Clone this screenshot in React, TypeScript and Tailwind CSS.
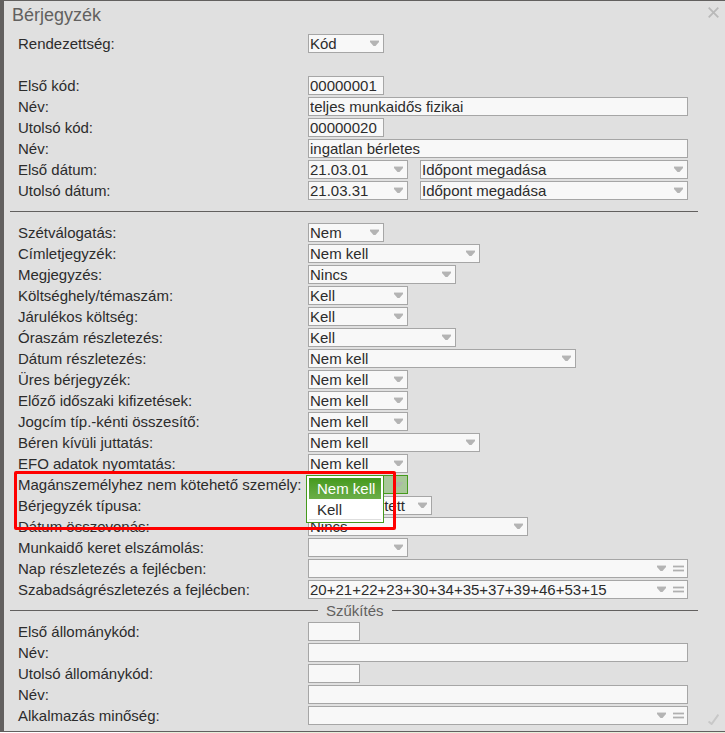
import React from "react";

type Kind = "text" | "select" | "combo";

interface FieldRow {
  id: string;
  label: string;
  kind: Kind;
  width: string;
  value?: string;
}

const W52 = "w-[52px]";
const W76 = "w-[76px]";
const W100 = "w-[100px]";
const W124 = "w-[124px]";
const W148 = "w-[148px]";
const W172 = "w-[172px]";
const W220 = "w-[220px]";
const W268 = "w-[268px]";

const rangeRows: FieldRow[] = [
  { id: "elso-kod", label: "Első kód:", kind: "text", width: W76, value: "00000001" },
  { id: "elso-nev", label: "Név:", kind: "text", width: "w-full", value: "teljes munkaidős fizikai" },
  { id: "utolso-kod", label: "Utolsó kód:", kind: "text", width: W76, value: "00000020" },
  { id: "utolso-nev", label: "Név:", kind: "text", width: "w-full", value: "ingatlan bérletes" },
];

const optionRows: FieldRow[] = [
  { id: "szetvalogatas", label: "Szétválogatás:", kind: "select", width: W76, value: "Nem" },
  { id: "cimletjegyzek", label: "Címletjegyzék:", kind: "select", width: W172, value: "Nem kell" },
  { id: "megjegyzes", label: "Megjegyzés:", kind: "select", width: W148, value: "Nincs" },
  { id: "koltseghely", label: "Költséghely/témaszám:", kind: "select", width: W100, value: "Kell" },
  { id: "jarulekos", label: "Járulékos költség:", kind: "select", width: W100, value: "Kell" },
  { id: "oraszam", label: "Óraszám részletezés:", kind: "select", width: W148, value: "Kell" },
  { id: "datum-reszl", label: "Dátum részletezés:", kind: "select", width: W268, value: "Nem kell" },
  { id: "ures", label: "Üres bérjegyzék:", kind: "select", width: W100, value: "Nem kell" },
  { id: "elozo", label: "Előző időszaki kifizetések:", kind: "select", width: W100, value: "Nem kell" },
  { id: "jogcim", label: "Jogcím típ.-kénti összesítő:", kind: "select", width: W100, value: "Nem kell" },
  { id: "beren-kivuli", label: "Béren kívüli juttatás:", kind: "select", width: W172, value: "Nem kell" },
  { id: "efo", label: "EFO adatok nyomtatás:", kind: "select", width: W100, value: "Nem kell" },
];

const layoutRows: FieldRow[] = [
  { id: "tipus", label: "Bérjegyzék típusa:", kind: "select", width: W124, value: "Egyszerűsített" },
  { id: "osszevonas", label: "Dátum összevonás:", kind: "select", width: W220, value: "Nincs" },
  { id: "munkaido", label: "Munkaidő keret elszámolás:", kind: "select", width: W100, value: "" },
  { id: "nap", label: "Nap részletezés a fejlécben:", kind: "combo", width: "w-full", value: "" },
  {
    id: "szabadsag",
    label: "Szabadságrészletezés a fejlécben:",
    kind: "combo",
    width: "w-full",
    value: "20+21+22+23+30+34+35+37+39+46+53+15",
  },
];

const filterRows: FieldRow[] = [
  { id: "elso-allomany", label: "Első állománykód:", kind: "text", width: W52 },
  { id: "elso-allomany-nev", label: "Név:", kind: "text", width: "w-full" },
  { id: "utolso-allomany", label: "Utolsó állománykód:", kind: "text", width: W52 },
  { id: "utolso-allomany-nev", label: "Név:", kind: "text", width: "w-full" },
  { id: "alkalmazas", label: "Alkalmazás minőség:", kind: "combo", width: "w-full" },
];

const box = "h-[19px] border border-[#a6a6a6] bg-[#f8f8f8] leading-[17px] text-[#2c2c2c] outline-none";

function Arrow({ className = "", active = false }: { className?: string; active?: boolean }) {
  return (
    <svg className={className} width="9" height="7" viewBox="0 0 9 7" aria-hidden="true">
      {!active && <path d="M0 0H9V1H0Z" fill="#dadada" />}
      <path d="M0 1H9V2L5.5 6H3.5L0 2Z" fill={active ? "#adb8a9" : "#b4b4b4"} />
    </svg>
  );
}

function TextBox({ id, value = "", width }: { id: string; value?: string; width: string }) {
  return <input id={id} type="text" defaultValue={value} className={`block ${box} ${width} px-px`} />;
}

function SelectBox({
  id,
  value = "",
  width,
  label,
  active = false,
}: {
  id: string;
  value?: string;
  width: string;
  label?: string;
  active?: boolean;
}) {
  const colors = active
    ? "border-[#459a1c] bg-[#a8c899] text-[#a8c899]"
    : "border-[#a6a6a6] bg-[#f8f8f8] text-[#2c2c2c]";
  return (
    <span className={`relative block ${width}`}>
      <select
        id={id}
        aria-label={label}
        defaultValue={value}
        className={`block h-[19px] w-full appearance-none border pr-4 pl-px leading-[17px] outline-none ${colors}`}
      >
        <option value={value}>{value}</option>
      </select>
      <Arrow active={active} className="pointer-events-none absolute top-[6px] right-[5px]" />
    </span>
  );
}

function ComboBox({ id, value = "", width }: { id: string; value?: string; width: string }) {
  return (
    <span className={`flex items-center ${box} ${width} pr-[3px]`}>
      <input
        id={id}
        type="text"
        defaultValue={value}
        className="h-[17px] min-w-0 flex-1 bg-transparent px-px outline-none"
      />
      <button type="button" aria-label="Lenyitás" className="mr-[7px]">
        <Arrow className="block" />
      </button>
      <button type="button" aria-label="Lista">
        <svg className="block" width="11" height="7" viewBox="0 0 11 7" aria-hidden="true">
          <path d="M0 0H11V3H0ZM0 4H11V7H0Z" fill="#dcdcdc" />
          <path d="M0 1H11V2H0ZM0 5H11V6H0Z" fill="#b0b0b0" />
        </svg>
      </button>
    </span>
  );
}

function Line({ id, label, children }: { id: string; label: string; children: React.ReactNode }) {
  return (
    <div className="flex h-[21px] items-center">
      <label htmlFor={id} className="w-[290px] shrink-0 leading-[21px] whitespace-nowrap">
        {label}
      </label>
      <div className="flex min-w-0 flex-1 gap-3">{children}</div>
    </div>
  );
}

function Rows({ rows }: { rows: FieldRow[] }) {
  return (
    <>
      {rows.map((r) => (
        <Line key={r.id} id={r.id} label={r.label}>
          {r.kind === "text" && <TextBox id={r.id} value={r.value} width={r.width} />}
          {r.kind === "select" && <SelectBox id={r.id} value={r.value} width={r.width} />}
          {r.kind === "combo" && <ComboBox id={r.id} value={r.value} width={r.width} />}
        </Line>
      ))}
    </>
  );
}

function DateLine({ id, label, date }: { id: string; label: string; date: string }) {
  return (
    <Line id={id} label={label}>
      <SelectBox id={id} value={date} width={W100} />
      <SelectBox id={`${id}-mod`} label={`${label} mód`} value="Időpont megadása" width="flex-1" />
    </Line>
  );
}

function OpenLine() {
  return (
    <div className="relative">
      <Line id="maganszemely" label="Magánszemélyhez nem kötehető személy:">
        <div className="relative">
          <SelectBox id="maganszemely" value="Nem kell" width={W100} active />
          <div
            role="listbox"
            aria-label="Magánszemélyhez nem kötehető személy"
            className="absolute top-0 -left-0.5 z-10 w-[78px] border border-[#459a1c] bg-white p-[2px]"
          >
            <div
              role="option"
              aria-selected="true"
              className="h-[21px] bg-linear-to-b from-[#459a1c] to-[#6bae48] pl-2 leading-[21px] whitespace-nowrap text-white"
            >
              Nem kell
            </div>
            <div
              role="option"
              aria-selected="false"
              className="h-[21px] border-b border-[#dedede] pl-2 leading-[21px]"
            >
              Kell
            </div>
          </div>
        </div>
      </Line>
      <div className="pointer-events-none absolute -top-[3px] -left-1 z-20 h-[59px] w-[382px] rounded-xs border-3 border-[#ff0000]" />
    </div>
  );
}

export default function App() {
  return (
    <div className="font-['Liberation_Sans',Arial,sans-serif] text-[15px] text-[#2c2c2c]">
      <form className="relative border-t border-b border-l-4 border-[#62605f] bg-[#e0e0e0] pb-[5px]">
        <header className="flex h-8 items-start justify-between pr-1.5 pl-2">
          <h1 className="pt-1 text-[18px] leading-5 text-[#62605f]">Bérjegyzék</h1>
          <button type="button" aria-label="Bezárás" className="pt-1.5">
            <svg className="block" width="11" height="11" viewBox="0 0 11 11" aria-hidden="true">
              <path d="M0.7 0.7L10.3 10.3M10.3 0.7L0.7 10.3" stroke="#b9b9b9" strokeWidth="1.8" />
            </svg>
          </button>
        </header>

        <section className="pr-[37px] pb-2.5 pl-3.5">
          <Line id="rendezettseg" label="Rendezettség:">
            <SelectBox id="rendezettseg" value="Kód" width={W76} />
          </Line>
          <div className="h-[21px]" />
          <Rows rows={rangeRows} />
          <DateLine id="elso-datum" label="Első dátum:" date="21.03.01" />
          <DateLine id="utolso-datum" label="Utolsó dátum:" date="21.03.31" />
        </section>

        <hr className="mr-[27px] ml-1.5 border-[#62605f]" />

        <section className="pt-2.5 pr-[37px] pl-3.5">
          <Rows rows={optionRows} />
          <OpenLine />
          <Rows rows={layoutRows} />
        </section>

        <div className="mr-[27px] ml-1.5 flex h-[21px] items-center gap-2 text-[#62605f]">
          <hr className="w-[308px] border-[#62605f]" />
          <h2 className="leading-[21px]">Szűkítés</h2>
          <hr className="flex-1 border-[#62605f]" />
        </div>

        <section className="pr-[37px] pl-3.5">
          <Rows rows={filterRows} />
        </section>

        <button type="submit" aria-label="Rendben" className="absolute right-1.5 bottom-1.5">
          <svg className="block" width="11" height="11" viewBox="0 0 11 11" aria-hidden="true">
            <path d="M0.6 7.4L3.6 10L10.4 0.6" fill="none" stroke="#c8c8c8" strokeWidth="2" />
          </svg>
        </button>
      </form>
      <div className="ml-[130px] h-px bg-[#e6f0dc]" />
    </div>
  );
}
